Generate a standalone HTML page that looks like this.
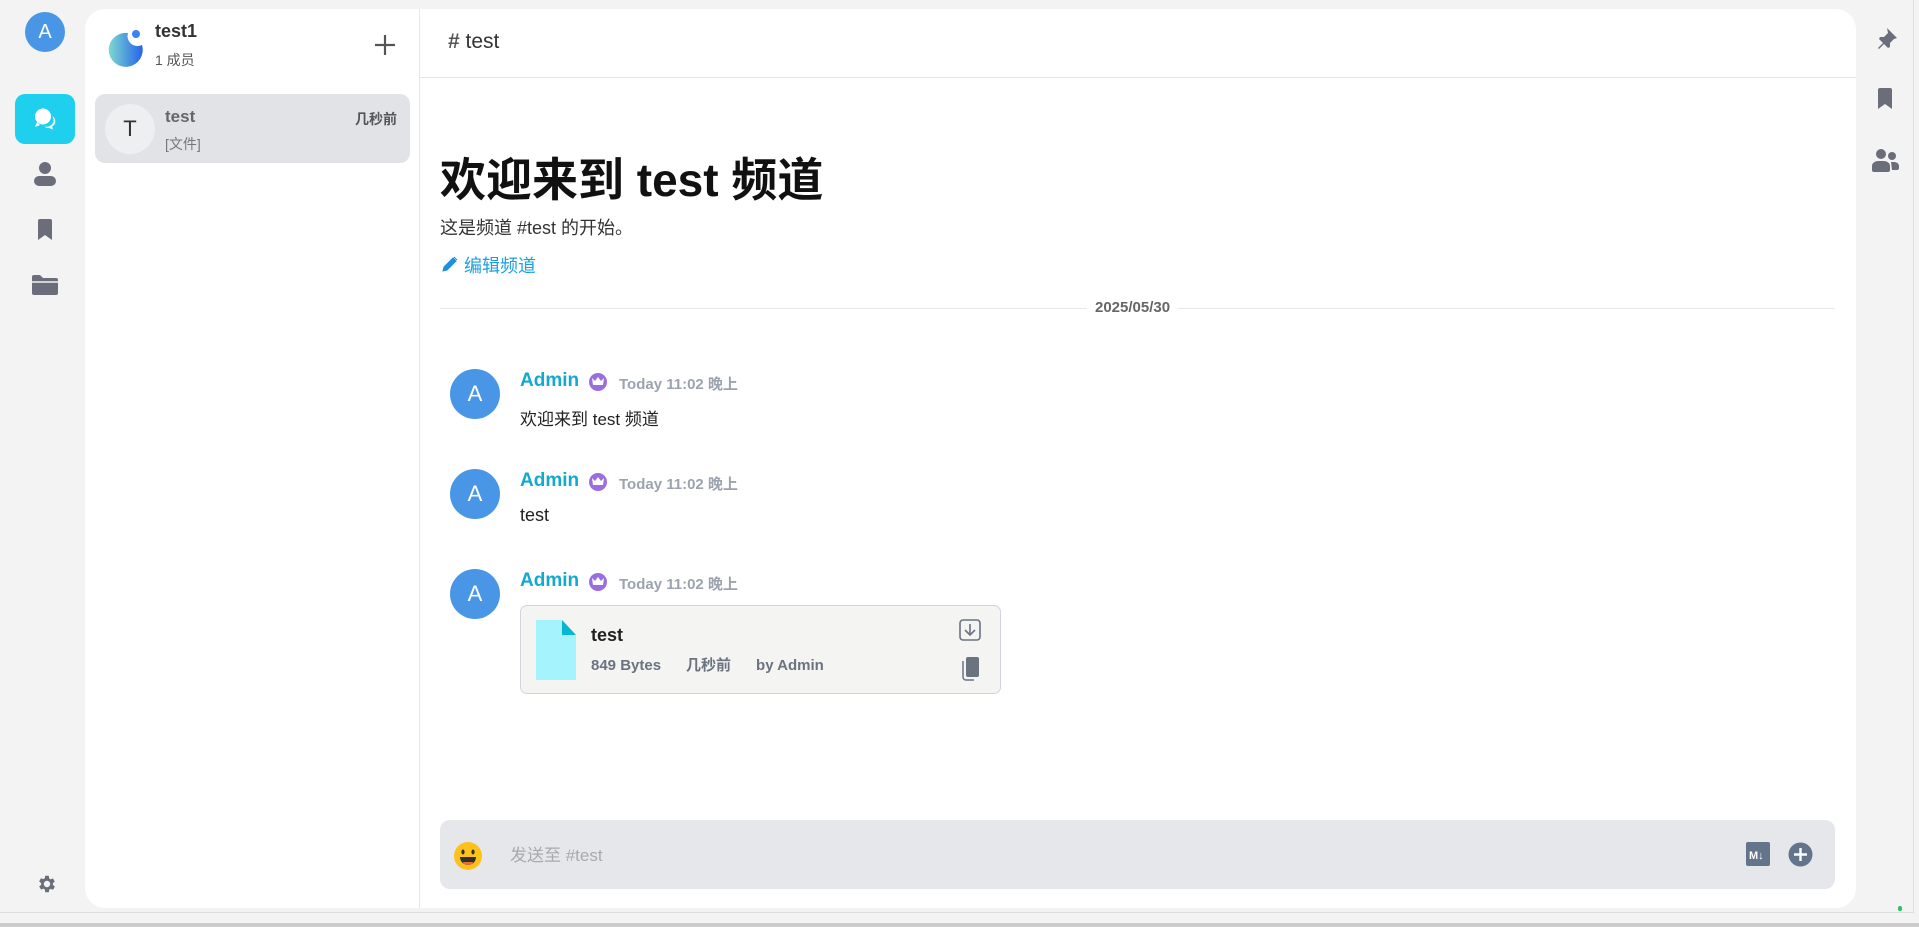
<!DOCTYPE html>
<html><head><meta charset="utf-8"><style>
*{box-sizing:border-box;margin:0;padding:0}
body{width:1919px;height:927px;overflow:hidden;background:#f3f3f4;font-family:"Liberation Sans","Noto Sans CJK SC",sans-serif;position:relative}
.abs{position:absolute}
.panel{left:85px;top:9px;width:1771px;height:899px;background:#fff;border-radius:20px;overflow:hidden}
.ic{fill:#6b6e7a}
.name{color:#13a9cf;font-weight:bold;font-size:19px}
.time{color:#9ca3af;font-weight:bold;font-size:15px}
.av{width:50px;height:50px;border-radius:50%;background:#4a96e6;color:#fff;font-size:22px;text-align:center;line-height:50px}
</style></head><body>
<div class="abs" style="left:0;top:0;width:1914px;height:913px;border-right:1px solid #ddd;border-bottom:1px solid #ddd"></div>
<div class="abs" style="left:0;top:923px;width:1919px;height:4px;background:#ccc"></div>
<!-- left rail -->
<div class="abs av" style="left:25px;top:12px;width:40px;height:40px;line-height:40px;font-size:20px">A</div>
<div class="abs" style="left:15px;top:94px;width:60px;height:50px;background:#1fcfee;border-radius:10px"></div>
<svg class="abs" style="left:33px;top:107px" width="24" height="24" viewBox="0 0 24 24"><path d="M19 9a7 6.5 0 0 1-7 10.5l1 1.2c1 .3 2 .3 3 .3l4 1.5-1-3a6.5 6 0 0 0 0-10.5z" fill="#fff"/><circle cx="10" cy="9.5" r="8" fill="#fff"/><path d="M4 15l-2 5 5-2z" fill="#fff"/></svg>
<svg class="abs" style="left:33px;top:161px" width="24" height="26" viewBox="0 0 24 26"><circle cx="12" cy="7" r="6" class="ic"/><rect x="1" y="15" width="22" height="10" rx="5" class="ic"/></svg>
<svg class="abs" style="left:37px;top:219px" width="16" height="21" viewBox="0 0 16 21"><path d="M1 2a2 2 0 0 1 2-2h10a2 2 0 0 1 2 2v19l-7-5-7 5z" class="ic"/></svg>
<svg class="abs" style="left:32px;top:274px" width="26" height="21" viewBox="0 0 26 21"><path d="M0 3a2 2 0 0 1 2-2h6l3 3h13a2 2 0 0 1 2 2v13a2 2 0 0 1-2 2H2a2 2 0 0 1-2-2z" class="ic"/><path d="M0 8h26" stroke="#f3f3f4" stroke-width="1.5"/></svg>
<svg class="abs" style="left:36px;top:873px" width="22" height="22" viewBox="0 0 24 24"><path d="M19.4 13a7.5 7.5 0 0 0 0-2l2.1-1.6-2-3.5-2.5 1a7 7 0 0 0-1.7-1L15 3h-4l-.4 2.7a7 7 0 0 0-1.7 1l-2.5-1-2 3.5L6.6 11a7.5 7.5 0 0 0 0 2l-2.1 1.6 2 3.5 2.5-1a7 7 0 0 0 1.7 1L11 21h4l.4-2.7a7 7 0 0 0 1.7-1l2.5 1 2-3.5zM13 15.5a3.5 3.5 0 1 1 0-7 3.5 3.5 0 0 1 0 7z" class="ic" transform="translate(-1 0)"/></svg>
<!-- right rail -->
<svg class="abs" style="left:1873px;top:26px" width="26" height="26" viewBox="0 0 26 26"><path d="M14 2l10 10-3 1-4 4 0 4-2 1-4-4-5 5-1-1 5-5-4-4 1-2h4l4-4z" class="ic"/></svg>
<svg class="abs" style="left:1877px;top:88px" width="16" height="21" viewBox="0 0 16 21"><path d="M1 2a2 2 0 0 1 2-2h10a2 2 0 0 1 2 2v19l-7-5-7 5z" class="ic"/></svg>
<svg class="abs" style="left:1872px;top:148px" width="27" height="24" viewBox="0 0 27 24"><circle cx="9" cy="6" r="5" class="ic"/><circle cx="20" cy="8" r="4" class="ic"/><path d="M0 18a6 5 0 0 1 6-5h6a6 5 0 0 1 6 5v4a2 2 0 0 1-2 2H2a2 2 0 0 1-2-2z" class="ic"/><path d="M19 14h3a5 4 0 0 1 5 4v2a2 2 0 0 1-2 2h-5z" class="ic"/></svg>
<div class="abs panel">
  <div class="abs" style="left:334px;top:0;width:1px;height:899px;background:#e5e7eb"></div>
  <svg class="abs" style="left:21px;top:18px" width="40" height="40" viewBox="0 0 40 40"><defs><linearGradient id="g" x1="0" x2="1"><stop offset="0" stop-color="#7dd9cf"/><stop offset="1" stop-color="#2563eb"/></linearGradient></defs><path d="M22 6a17 17 0 1 0 14 12 10 10 0 0 1-14-12z" fill="url(#g)"/><circle cx="30" cy="7" r="4" fill="#3b82f6"/></svg>
  <div class="abs" style="left:70px;top:12px;font-size:18px;font-weight:bold;color:#333">test1</div>
  <div class="abs" style="left:70px;top:41px;font-size:14px;color:#555">1 成员</div>
  <svg class="abs" style="left:288px;top:24px" width="24" height="24"><path d="M12 2v20M2 12h20" stroke="#555" stroke-width="2.2"/></svg>
  <div class="abs" style="left:10px;top:85px;width:315px;height:69px;background:#e2e3e6;border-radius:10px"></div>
  <div class="abs" style="left:20px;top:95px;width:50px;height:50px;border-radius:50%;background:#eeeff1;text-align:center;line-height:50px;font-size:22px;color:#333">T</div>
  <div class="abs" style="left:80px;top:98px;font-size:17px;font-weight:bold;color:#666">test</div>
  <div class="abs" style="left:80px;top:125px;font-size:14px;color:#777">[文件]</div>
  <div class="abs" style="left:270px;top:100px;font-size:14px;font-weight:bold;color:#555">几秒前</div>
  <div class="abs" style="left:335px;top:68px;width:1436px;height:1px;background:#e5e7eb"></div>
  <div class="abs" style="left:363px;top:21px;font-size:21px;color:#333"><span style="color:#555;font-weight:bold">#</span> test</div>
  <div class="abs" style="left:355px;top:135px;font-size:46px;font-weight:bold;color:#111">欢迎来到 test 频道</div>
  <div class="abs" style="left:355px;top:205px;font-size:18px;color:#333">这是频道 #test 的开始。</div>
  <svg class="abs" style="left:357px;top:247px" width="16" height="16" viewBox="0 0 16 16"><path d="M1 15l1-4 9-9 3 3-9 9zM12 1l3 3" fill="#1f8fe0" stroke="#1f8fe0"/></svg>
  <div class="abs" style="left:379px;top:243px;font-size:18px;color:#1ea0e0">编辑频道</div>
  <div class="abs" style="left:355px;top:299px;width:1395px;height:1px;background:#e5e7eb"></div>
  <div class="abs" style="left:1002px;top:290px;padding:0 8px;background:#fff;font-size:15px;font-weight:bold;color:#666">2025/05/30</div>
  <div class="abs av" style="left:365px;top:360px">A</div>
  <div class="abs name" style="left:435px;top:361px">Admin</div>
  <div class="abs time" style="left:534px;top:364px">Today 11:02 晚上</div>
  <div class="abs" style="left:435px;top:396px;font-size:17px;color:#222">欢迎来到 test 频道</div>
  <div class="abs av" style="left:365px;top:460px">A</div>
  <div class="abs name" style="left:435px;top:461px">Admin</div>
  <div class="abs time" style="left:534px;top:464px">Today 11:02 晚上</div>
  <div class="abs" style="left:435px;top:496px;font-size:18px;color:#222">test</div>
  <div class="abs av" style="left:365px;top:560px">A</div>
  <div class="abs name" style="left:435px;top:561px">Admin</div>
  <div class="abs time" style="left:534px;top:564px">Today 11:02 晚上</div>
  <svg class="abs" style="left:503px;top:363px" width="20" height="20"><circle cx="10" cy="10" r="9" fill="#9b6ee0"/><path d="M5 13l-1-7 3 3 3-4 3 4 3-3-1 7z" fill="#fff"/></svg>
  <svg class="abs" style="left:503px;top:463px" width="20" height="20"><circle cx="10" cy="10" r="9" fill="#9b6ee0"/><path d="M5 13l-1-7 3 3 3-4 3 4 3-3-1 7z" fill="#fff"/></svg>
  <svg class="abs" style="left:503px;top:563px" width="20" height="20"><circle cx="10" cy="10" r="9" fill="#9b6ee0"/><path d="M5 13l-1-7 3 3 3-4 3 4 3-3-1 7z" fill="#fff"/></svg>
  <div class="abs" style="left:435px;top:596px;width:481px;height:89px;background:#f4f4f3;border:1px solid #d1d5db;border-radius:7px"></div>
  <svg class="abs" style="left:451px;top:611px" width="40" height="60"><path d="M0 0h26l14 15v45H0z" fill="#a5f3fc"/><path d="M26 0l14 15H26z" fill="#06b6d4"/></svg>
  <div class="abs" style="left:506px;top:616px;font-size:18px;font-weight:bold;color:#222">test</div>
  <div class="abs" style="left:506px;top:645px;font-size:15px;font-weight:bold;color:#6b7280;white-space:pre">849 Bytes      几秒前      by Admin</div>
  <svg class="abs" style="left:874px;top:610px" width="22" height="22"><rect x="1" y="1" width="20" height="20" rx="3" fill="none" stroke="#6b7280" stroke-width="1.6"/><path d="M11 5v11M6 11l5 5 5-5" fill="none" stroke="#6b7280" stroke-width="1.6"/></svg>
  <svg class="abs" style="left:876px;top:648px" width="20" height="24"><path d="M2 4v16a3 3 0 0 0 3 3h8" fill="none" stroke="#6b7280" stroke-width="1.5"/><rect x="5" y="0" width="13" height="20" rx="2" fill="#6b7280"/></svg>
  <div class="abs" style="left:355px;top:811px;width:1395px;height:69px;background:#e5e7eb;border-radius:10px"></div>
  <svg class="abs" style="left:368px;top:832px" width="30" height="30"><circle cx="15" cy="15" r="14" fill="#fcc21b"/><ellipse cx="10" cy="11" rx="1.6" ry="2.5" fill="#2f2f2f"/><ellipse cx="20" cy="11" rx="1.6" ry="2.5" fill="#2f2f2f"/><path d="M7 16h16a8 8 0 0 1-16 0z" fill="#2f2f2f"/><path d="M10 21h10a5 3 0 0 1-10 0z" fill="#ed6c30"/></svg>
  <div class="abs" style="left:425px;top:832px;font-size:17px;color:#aaa">发送至 #test</div>
  <svg class="abs" style="left:1661px;top:833px" width="24" height="24"><rect width="24" height="24" rx="2" fill="#64748b"/><text x="3" y="17" font-size="11" font-weight="bold" fill="#fff" font-family="Liberation Sans">M↓</text></svg>
  <svg class="abs" style="left:1703px;top:833px" width="25" height="25"><circle cx="12.5" cy="12.5" r="12" fill="#64748b"/><path d="M12.5 6v13M6 12.5h13" stroke="#fff" stroke-width="2.4"/></svg>
</div>
<div class="abs" style="left:1898px;top:906px;width:4px;height:5px;border-radius:2px;background:#22c55e"></div>
</body></html>
